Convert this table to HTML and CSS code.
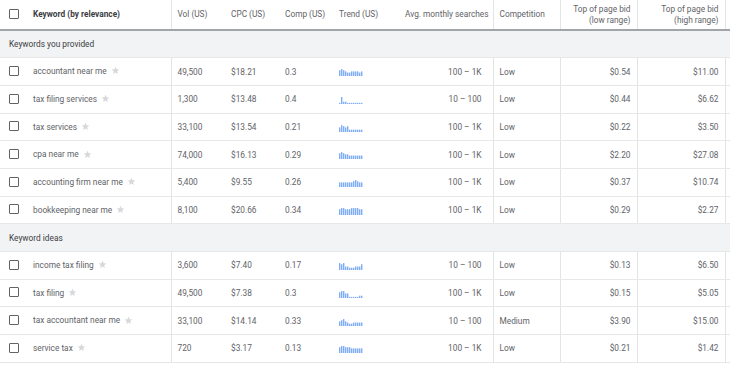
FILE: index.html
```html
<!DOCTYPE html>
<html lang="en">
<head>
    <meta charset="UTF-8">
    <title>Keyword ideas</title>
    <link rel="stylesheet" href="styles.css">
</head>
<body>
    <table class="kw-table">
        <colgroup>
            <col class="c-kw">
            <col class="c-vol">
            <col class="c-cpc">
            <col class="c-comp">
            <col class="c-trend">
            <col class="c-avg">
            <col class="c-competition">
            <col class="c-low">
            <col class="c-high">
            <col class="c-more">
        </colgroup>
        <thead>
            <tr>
                <th class="kw sep"><span class="checkbox"></span><span class="kw-title">Keyword (by relevance)</span></th>
                <th>Vol (US)</th>
                <th>CPC (US)</th>
                <th>Comp (US)</th>
                <th>Trend (US)</th>
                <th class="num sep">Avg. monthly searches</th>
                <th class="sep">Competition</th>
                <th class="num sep">Top of page bid<br>(low range)</th>
                <th class="num sep">Top of page bid<br>(high range)</th>
                <th></th>
            </tr>
        </thead>
        <tbody>
            <tr class="group"><td colspan="10">Keywords you provided</td></tr>
            <tr>
                <td class="kw sep"><span class="checkbox"></span>accountant near me<span class="star"></span></td>
                <td>49,500</td><td>$18.21</td><td>0.3</td>
                <td><span class="trend" data-bars="5,6,5,4,3,3,4,4,4,4,3,4"></span></td>
                <td class="num avg sep">100 – 1K</td><td class="sep">Low</td>
                <td class="num sep">$0.54</td><td class="num sep">$11.00</td><td></td>
            </tr>
            <tr>
                <td class="kw sep"><span class="checkbox"></span>tax filing services<span class="star"></span></td>
                <td>1,300</td><td>$13.48</td><td>0.4</td>
                <td><span class="trend" data-bars="1,6,2,2,1,1,1,1,1,1,1,1"></span></td>
                <td class="num avg sep">10 – 100</td><td class="sep">Low</td>
                <td class="num sep">$0.44</td><td class="num sep">$6.62</td><td></td>
            </tr>
            <tr>
                <td class="kw sep"><span class="checkbox"></span>tax services<span class="star"></span></td>
                <td>33,100</td><td>$13.54</td><td>0.21</td>
                <td><span class="trend" data-bars="4,6,5,4,5,2,2,2,2,2,2,2"></span></td>
                <td class="num avg sep">100 – 1K</td><td class="sep">Low</td>
                <td class="num sep">$0.22</td><td class="num sep">$3.50</td><td></td>
            </tr>
            <tr>
                <td class="kw sep"><span class="checkbox"></span>cpa near me<span class="star"></span></td>
                <td>74,000</td><td>$16.13</td><td>0.29</td>
                <td><span class="trend" data-bars="5,6,5,4,4,3,3,3,3,3,3,3"></span></td>
                <td class="num avg sep">100 – 1K</td><td class="sep">Low</td>
                <td class="num sep">$2.20</td><td class="num sep">$27.08</td><td></td>
            </tr>
            <tr>
                <td class="kw sep"><span class="checkbox"></span>accounting firm near me<span class="star"></span></td>
                <td>5,400</td><td>$9.55</td><td>0.26</td>
                <td><span class="trend" data-bars="4,4,4,4,4,4,4,5,6,5,4,4"></span></td>
                <td class="num avg sep">100 – 1K</td><td class="sep">Low</td>
                <td class="num sep">$0.37</td><td class="num sep">$10.74</td><td></td>
            </tr>
            <tr>
                <td class="kw sep"><span class="checkbox"></span>bookkeeping near me<span class="star"></span></td>
                <td>8,100</td><td>$20.66</td><td>0.34</td>
                <td><span class="trend" data-bars="5,6,6,5,5,5,6,6,6,6,5,5"></span></td>
                <td class="num avg sep">100 – 1K</td><td class="sep">Low</td>
                <td class="num sep">$0.29</td><td class="num sep">$2.27</td><td></td>
            </tr>
            <tr class="group"><td colspan="10">Keyword ideas</td></tr>
            <tr>
                <td class="kw sep"><span class="checkbox"></span>income tax filing<span class="star"></span></td>
                <td>3,600</td><td>$7.40</td><td>0.17</td>
                <td><span class="trend" data-bars="6,5,6,3,3,2,2,2,3,3,3,5"></span></td>
                <td class="num avg sep">10 – 100</td><td class="sep">Low</td>
                <td class="num sep">$0.13</td><td class="num sep">$6.50</td><td></td>
            </tr>
            <tr>
                <td class="kw sep"><span class="checkbox"></span>tax filing<span class="star"></span></td>
                <td>49,500</td><td>$7.38</td><td>0.3</td>
                <td><span class="trend" data-bars="5,6,6,4,4,1,1,1,1,1,2,2"></span></td>
                <td class="num avg sep">100 – 1K</td><td class="sep">Low</td>
                <td class="num sep">$0.15</td><td class="num sep">$5.05</td><td></td>
            </tr>
            <tr>
                <td class="kw sep"><span class="checkbox"></span>tax accountant near me<span class="star"></span></td>
                <td>33,100</td><td>$14.14</td><td>0.33</td>
                <td><span class="trend" data-bars="4,5,6,4,3,2,2,3,3,3,3,3"></span></td>
                <td class="num avg sep">10 – 100</td><td class="sep">Medium</td>
                <td class="num sep">$3.90</td><td class="num sep">$15.00</td><td></td>
            </tr>
            <tr>
                <td class="kw sep"><span class="checkbox"></span>service tax<span class="star"></span></td>
                <td>720</td><td>$3.17</td><td>0.13</td>
                <td><span class="trend" data-bars="5,6,6,5,5,5,4,4,4,4,4,4"></span></td>
                <td class="num avg sep">100 – 1K</td><td class="sep">Low</td>
                <td class="num sep">$0.21</td><td class="num sep">$1.42</td><td></td>
            </tr>
        </tbody>
    </table>

    <script>
        // Build the little trend bars from each cell's data-bars list
        const SVG_NS = 'http://www.w3.org/2000/svg';
        document.querySelectorAll('.trend').forEach((el) => {
            const svg = document.createElementNS(SVG_NS, 'svg');
            svg.setAttribute('width', '24');
            svg.setAttribute('height', '8');
            el.dataset.bars.split(',').forEach((v, i) => {
                const h = Number(v) * 1.15;
                const bar = document.createElementNS(SVG_NS, 'rect');
                bar.setAttribute('x', i * 2);
                bar.setAttribute('y', 8 - h);
                bar.setAttribute('width', '1.4');
                bar.setAttribute('height', h);
                svg.appendChild(bar);
            });
            el.appendChild(svg);
        });

        // Grey star after each keyword
        const STAR = '<svg viewBox="0 0 24 24" width="9" height="9"><path d="M12 2l2.9 6.9 7.1.6-5.4 4.7 1.6 7-6.2-3.8-6.2 3.8 1.6-7L2 9.5l7.1-.6z" fill="#d6d8db"/></svg>';
        document.querySelectorAll('.star').forEach((el) => {
            el.innerHTML = STAR;
        });
    </script>
</body>
</html>
```

FILE: styles.css
```css
* {
    margin: 0;
    padding: 0;
    box-sizing: border-box;
}

body {
    font-family: Roboto, "Liberation Sans", Arial, sans-serif;
    background: white;
    width: 730px;
    height: 365px;
    overflow: hidden;
}

.kw-table {
    border-collapse: collapse;
    table-layout: fixed;
    width: 760px;
    font-size: 8.3px;
    color: #5f6368;
}

.c-kw { width: 171px; }
.c-vol { width: 54px; }
.c-cpc { width: 54px; }
.c-comp { width: 54px; }
.c-trend { width: 66px; }
.c-avg { width: 94px; }
.c-competition { width: 67px; }
.c-low { width: 77px; }
.c-high { width: 88px; }
.c-more { width: 35px; }

th {
    height: 30px;
    font-weight: 400;
    text-align: left;
    padding: 0 6px;
    line-height: 11px;
    border-bottom: 2px solid #a2a5a8;
    white-space: nowrap;
}

td {
    height: 27.7px;
    padding: 0 6px;
    border-bottom: 1px solid #e6e7e9;
    white-space: nowrap;
}

.sep {
    border-right: 1px solid #e3e4e6;
}

.num {
    text-align: right;
}

td.avg {
    padding-right: 11px;
}

th.kw,
td.kw {
    padding-left: 9px;
}

.kw-title {
    font-weight: 700;
    color: #3c4043;
}

.checkbox {
    display: inline-block;
    width: 10px;
    height: 10px;
    border: 1.6px solid #5f6368;
    border-radius: 1px;
    margin-right: 14px;
    vertical-align: middle;
    position: relative;
    top: -1px;
}

.star {
    display: inline-block;
    margin-left: 4px;
    vertical-align: middle;
    position: relative;
    top: -1px;
}

.star svg {
    display: block;
}

.group td {
    background: #f1f3f4;
    color: #3c4043;
    padding-left: 9px;
    border-right: none;
}

.trend {
    display: inline-block;
    vertical-align: middle;
}

.trend svg {
    display: block;
    fill: #7eacf6;
}
```
